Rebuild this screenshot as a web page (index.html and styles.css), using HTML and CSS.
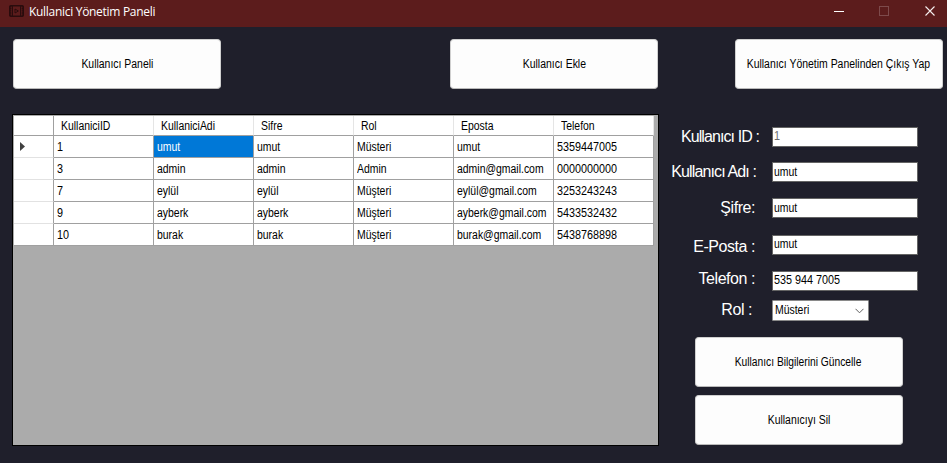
FILE: index.html
```html
<!DOCTYPE html>
<html lang="tr">
<head>
<meta charset="utf-8">
<title>Kullanici Yönetim Paneli</title>
<link rel="stylesheet" href="styles.css">
</head>
<body>
<div class="window">
  <header class="titlebar">
    <svg class="app-icon" width="15" height="12" viewBox="0 0 15 12">
      <rect x=".75" y=".75" width="13.5" height="10.5" rx="1" fill="none" stroke="#2a0c0d" stroke-width="1.5"/>
      <path d="M3.5 1v10M11.5 1v10" stroke="#2a0c0d" stroke-width="1"/>
      <path d="M1.7 1v10M13.3 1v10" stroke="#2a0c0d" stroke-width="1.5" stroke-dasharray="1.4 .7"/>
      <path d="M6 4v4l3.4-2z" fill="none" stroke="#2a0c0d"/>
    </svg>
    <h1 class="title">Kullanici Yönetim Paneli</h1>
    <svg class="controls" width="113" height="27" viewBox="0 0 113 27">
      <path d="M0 11.5h10" stroke="#fff"/>
      <rect x="45.5" y="6.5" width="9" height="9" fill="none" stroke="#7d4a4b"/>
      <path d="M91.5 6.5l9 9m0-9l-9 9" stroke="#f5eeee" stroke-width="1.1"/>
    </svg>
  </header>

  <nav class="toolbar">
    <button class="btn"><span class="t">Kullanıcı Paneli</span></button>
    <button class="btn btn-add"><span class="t">Kullanıcı Ekle</span></button>
    <button class="btn btn-exit"><span class="t">Kullanıcı Yönetim Panelinden Çıkış Yap</span></button>
  </nav>

  <main class="content">
    <section class="grid-view">
      <table class="users">
        <thead>
          <tr><th class="row-head"></th><th><span class="t">KullaniciID</span></th><th><span class="t">KullaniciAdi</span></th><th><span class="t">Sifre</span></th><th><span class="t">Rol</span></th><th><span class="t">Eposta</span></th><th><span class="t">Telefon</span></th></tr>
        </thead>
        <tbody>
          <tr><td class="row-head"><svg class="marker" width="5" height="9" viewBox="0 0 5 9"><path d="M0 0v9l5-4.5z" fill="#404040"/></svg></td><td><span class="t num">1</span></td><td class="selected"><span class="t">umut</span></td><td><span class="t">umut</span></td><td><span class="t">Müsteri</span></td><td><span class="t">umut</span></td><td><span class="t num">5359447005</span></td></tr>
          <tr><td class="row-head"></td><td><span class="t num">3</span></td><td><span class="t">admin</span></td><td><span class="t">admin</span></td><td><span class="t">Admin</span></td><td><span class="t">admin@gmail.com</span></td><td><span class="t num">0000000000</span></td></tr>
          <tr><td class="row-head"></td><td><span class="t num">7</span></td><td><span class="t">eylül</span></td><td><span class="t">eylül</span></td><td><span class="t">Müşteri</span></td><td><span class="t">eylül@gmail.com</span></td><td><span class="t num">3253243243</span></td></tr>
          <tr><td class="row-head"></td><td><span class="t num">9</span></td><td><span class="t">ayberk</span></td><td><span class="t">ayberk</span></td><td><span class="t">Müşteri</span></td><td><span class="t">ayberk@gmail.com</span></td><td><span class="t num">5433532432</span></td></tr>
          <tr><td class="row-head"></td><td><span class="t num">10</span></td><td><span class="t">burak</span></td><td><span class="t">burak</span></td><td><span class="t">Müşteri</span></td><td><span class="t">burak@gmail.com</span></td><td><span class="t num">5438768898</span></td></tr>
        </tbody>
      </table>
    </section>

    <section class="form">
      <div class="field field-id"><span class="label">Kullanıcı ID :</span><div class="input disabled"><span class="t num">1</span></div></div>
      <div class="field field-name"><span class="label">Kullanıcı Adı :</span><div class="input"><span class="t">umut</span></div></div>
      <div class="field field-pass"><span class="label">Şifre:</span><div class="input"><span class="t">umut</span></div></div>
      <div class="field field-mail"><span class="label">E-Posta :</span><div class="input"><span class="t">umut</span></div></div>
      <div class="field field-phone"><span class="label">Telefon :</span><div class="input"><span class="t num">535 944 7005</span></div></div>
      <div class="field field-role"><span class="label">Rol :</span><div class="select"><span class="t">Müsteri</span><svg width="9" height="6" viewBox="0 0 9 6"><path d="M.5.8l4 4 4-4" fill="none" stroke="#606060"/></svg></div></div>
      <div class="actions">
        <button class="btn btn-update"><span class="t">Kullanıcı Bilgilerini Güncelle</span></button>
        <button class="btn"><span class="t">Kullanıcıyı Sil</span></button>
      </div>
    </section>
  </main>
</div>
</body>
</html>
```
FILE: styles.css
```css
* { box-sizing: border-box; }

body {
  margin: 0;
  background: #1f1f2b;
  font: 12px/14px "Liberation Sans", Arial, sans-serif;
  color: #000;
}

.window { width: 947px; height: 463px; overflow: hidden; }

.titlebar {
  display: flex;
  height: 27px;
  padding-left: 9px;
  background: #5c1c1c;
}
.app-icon { margin: 5px 5px 0 0; }
.title {
  flex: 1;
  margin: 3px 0 0;
  font: 12px/17px "Open Sans", "Noto Sans", sans-serif;
  letter-spacing: -0.3px;
  color: #fff;
}

/* Condensed interface text */
.t {
  display: inline-block;
  white-space: pre;
  transform: scaleX(.87);
  transform-origin: left center;
}
.num { transform: scaleX(.9); }

.toolbar { display: flex; padding: 12px 0 0 13px; }
.btn {
  display: flex;
  align-items: center;
  justify-content: center;
  width: 208px;
  height: 50px;
  padding: 0;
  border: 1px solid #d0d0d0;
  border-bottom-color: #bababa;
  border-radius: 4px;
  background: #fdfdfd;
  font: inherit;
  color: #000;
}
.btn .t { transform-origin: center; }
.btn-add { margin-left: 229px; }
.btn-exit { margin-left: 77px; padding-right: 2px; }
.btn-update { padding-right: 2px; }
.btn-update .t { transform: scaleX(.855); }

.content { display: flex; padding: 25px 0 0 12px; }

.grid-view {
  width: 647px;
  height: 332px;
  padding: 1px;
  border: 1px solid #000;
  background: #ababab;
}
.users {
  width: 640px;
  table-layout: fixed;
  border-collapse: separate;
  border-spacing: 0;
  background: #fff;
}
.users th, .users td {
  width: 100px;
  height: 22px;
  padding: 0 0 0 3px;
  border-right: 1px solid #a0a0a0;
  border-bottom: 1px solid #a0a0a0;
  text-align: left;
  font-weight: normal;
  white-space: nowrap;
}
.users th {
  height: 20px;
  padding-left: 7px;
  border-right-color: #e5e5e5;
}
.users .row-head { width: 40px; border-right-color: #a0a0a0; }
.users td.row-head { padding-left: 6px; border-bottom-color: #e2e2e2; }
.users tr:last-child td.row-head { border-bottom-color: #a0a0a0; }
.users td.selected { background: #0078d7; color: #fff; }
.marker { display: block; }

.form { width: 288px; padding-top: 13px; }
.field { display: flex; height: 20px; }
.label {
  width: 113px;
  padding-right: 12px;
  font-size: 16px;
  line-height: 20px;
  letter-spacing: -0.45px;
  text-align: right;
  white-space: nowrap;
  color: #fff;
}
.input {
  width: 146px;
  height: 20px;
  padding: 2px 0 0 1px;
  border: 1px solid #646464;
  background: #fff;
}
.input .t { display: block; width: max-content; }
.input.disabled { padding-top: 1px; color: #6d6d6d; }
.field-id .label { padding-right: 13px; letter-spacing: -0.9px; }
.field-name { margin-top: 15px; }
.field-name .label { padding-right: 16px; letter-spacing: -0.87px; }
.field-pass { margin-top: 16px; }
.field-pass .label { padding-right: 17px; }
.field-mail { margin-top: 17px; }
.field-mail .input { padding-top: 1px; }
.field-mail .label { padding: 2px 17px 0 0; }
.field-phone { margin-top: 16px; }
.field-phone .input { padding-top: 1px; }
.field-phone .label { line-height: 16px; padding-right: 17px; }
.field-role { margin-top: 9px; height: 21px; }
.field-role .label { padding-right: 20px; }
.select {
  display: flex;
  align-items: center;
  justify-content: space-between;
  width: 97px;
  height: 21px;
  padding: 0 4px 2px 2px;
  border: 1px solid #8a8a8a;
  border-radius: 1px;
  background: #fff;
}
.select svg { margin-top: 2px; }
.actions {
  display: flex;
  flex-direction: column;
  gap: 8px;
  padding: 16px 0 0 36px;
}
```
